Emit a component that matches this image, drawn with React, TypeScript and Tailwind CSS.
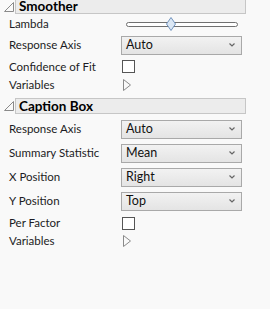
import React from "react";

const Corner = () => (
  <svg width="10" height="10" viewBox="0 0 10 10" className="shrink-0">
    <polygon points="9.5,0.5 9.5,9.5 0.5,9.5" fill="none" stroke="#8a8a8a" strokeWidth="1" />
  </svg>
);

const Header = ({ title, first = false }: { title: string; first?: boolean }) => (
  <div className={`flex items-center ${first ? "h-[14px]" : "h-[16px]"}`}>
    <div className="w-[15px] flex justify-center pl-[2px]">
      <Corner />
    </div>
    <div
      className={`h-full w-[231px] bg-[#ececec] border border-[#c6c6c6] flex items-center pl-[3px] ${
        first ? "border-t-0" : ""
      }`}
    >
      <span className="text-[13.5px] font-bold text-black leading-[13px]">{title}</span>
    </div>
  </div>
);

const Select = ({ value }: { value: string }) => (
  <div className="w-[121px] h-[19px] border border-[#a9a9a9] bg-gradient-to-b from-[#f2f2f2] to-[#e4e4e4] flex items-center justify-between pl-[4px] pr-[6px]">
    <span className="text-[12.5px] text-[#111] leading-none">{value}</span>
    <svg width="6" height="4" viewBox="0 0 6 4">
      <polyline points="0.5,0.5 3,3 5.5,0.5" fill="none" stroke="#666" strokeWidth="1.2" />
    </svg>
  </div>
);

const Check = () => <div className="ml-[1px] w-[13px] h-[13px] border border-[#555] bg-white" />;

const Arrow = () => (
  <svg width="9" height="12" viewBox="0 0 9 12" className="ml-[2px]">
    <polygon points="0.5,0.5 7.5,6 0.5,11.5" fill="none" stroke="#8a8a8a" strokeWidth="1" />
  </svg>
);

const Slider = () => (
  <div className="relative w-[112px] h-[14px] ml-[5px] flex items-center">
    <div className="w-full h-[5px] rounded-full border border-[#707070] bg-white" />
    <svg width="10" height="14" viewBox="0 0 10 14" className="absolute left-[40px] top-0">
      <polygon points="5,0.5 9.5,7 5,13.5 0.5,7" fill="#dbe7f4" stroke="#7193bd" strokeWidth="1" />
    </svg>
  </div>
);

const Row = ({ label, h, children }: { label: string; h: string; children: React.ReactNode }) => (
  <div className={`flex items-center ${h}`}>
    <span className="w-[112px] text-[11.5px] text-[#1c1c24] leading-none">{label}</span>
    {children}
  </div>
);

export default function App() {
  return (
    <div className="w-[270px] h-[309px] overflow-hidden bg-[#f9f9f9] font-['Lato','Open_Sans',sans-serif] flex flex-col pl-[9px]">
      <div className="-ml-[9px]">
        <Header title="Smoother" first />
      </div>
      <Row label="Lambda" h="h-[20px]">
        <Slider />
      </Row>
      <Row label="Response Axis" h="h-[22px]">
        <Select value="Auto" />
      </Row>
      <Row label="Confidence of Fit" h="h-[21px]">
        <Check />
      </Row>
      <Row label="Variables" h="h-[16px]">
        <Arrow />
      </Row>
      <div className="-ml-[9px] mt-[5px]">
        <Header title="Caption Box" />
      </div>
      <div className="mt-[3px]" />
      <Row label="Response Axis" h="h-[24px]">
        <Select value="Auto" />
      </Row>
      <Row label="Summary Statistic" h="h-[24px]">
        <Select value="Mean" />
      </Row>
      <Row label="X Position" h="h-[24px]">
        <Select value="Right" />
      </Row>
      <Row label="Y Position" h="h-[24px]">
        <Select value="Top" />
      </Row>
      <Row label="Per Factor" h="h-[20px]">
        <Check />
      </Row>
      <Row label="Variables" h="h-[16px]">
        <Arrow />
      </Row>
    </div>
  );
}
